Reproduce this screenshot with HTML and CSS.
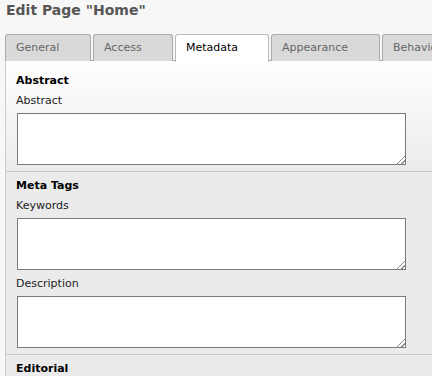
FILE: index.html
```html
<!DOCTYPE html>
<html lang="en">

<head>
  <meta charset="UTF-8">
  <meta name="viewport" content="width=device-width, initial-scale=1.0">
  <title>Edit Page "Home"</title>
  <link rel="stylesheet" href="styles.css">
</head>

<body>
  <h1 class="page-title">Edit Page "Home"</h1>

  <div class="tabs">
    <div class="tab tab-general">General</div>
    <div class="tab tab-access">Access</div>
    <div class="tab tab-metadata active">Metadata</div>
    <div class="tab tab-appearance">Appearance</div>
    <div class="tab tab-behavior">Behavior</div>
  </div>

  <div class="panel">
    <div class="section first">
      <h2>Abstract</h2>
      <label class="field-label">Abstract</label>
      <div class="field"><textarea></textarea></div>
    </div>

    <div class="section">
      <h2>Meta Tags</h2>
      <label class="field-label">Keywords</label>
      <div class="field"><textarea></textarea></div>
      <label class="field-label">Description</label>
      <div class="field"><textarea></textarea></div>
    </div>

    <div class="section">
      <h2>Editorial</h2>
    </div>
  </div>
</body>

</html>
```

FILE: styles.css
```css
body {
  margin: 0;
  background-color: #f7f7f7;
  font-family: "DejaVu Sans", Verdana, sans-serif;
  font-size: 11px;
  overflow: hidden;
}

.page-title {
  margin: 0;
  padding: 1px 6px 0;
  font-size: 14px;
  line-height: 18px;
  color: #555;
}

.tabs {
  display: flex;
  gap: 2px;
  margin-top: 15px;
  padding-left: 5px;
  height: 27px;
}

.tab {
  box-sizing: border-box;
  flex-shrink: 0;
  height: 27px;
  padding-left: 10px;
  line-height: 25px;
  border: 1px solid #aaa;
  border-bottom: none;
  border-radius: 3px 3px 0 0;
  background-color: #d9d9d9;
  color: #666;
  white-space: nowrap;
  overflow: hidden;
}

.tab-general { width: 86px; }
.tab-access { width: 80px; }
.tab-metadata { width: 94px; }
.tab-appearance { width: 109px; }
.tab-behavior { width: 110px; }

.tab.active {
  position: relative;
  z-index: 1;
  height: 28px;
  background-color: #fff;
  border-color: #bbb;
  color: #000;
}

.panel {
  margin-left: 5px;
  margin-top: -1px;
  width: 480px;
  border-top: 1px solid #aaa;
  border-left: 1px solid #ccc;
  background: #ebebeb linear-gradient(#fff, #ebebeb 110px) no-repeat;
}

.section {
  padding: 6px 0 6px 10px;
  border-bottom: 1px solid #c8c8c8;
}

.section.first {
  padding-top: 12px;
}

h2 {
  margin: 0;
  font-size: 11px;
  line-height: 16px;
  color: #000;
}

.field-label {
  display: block;
  margin-top: 4px;
  line-height: 16px;
  color: #222;
}

.field {
  position: relative;
  width: 389px;
  height: 52px;
  margin: 4px 0 0 1px;
}

.field + .field-label {
  margin-top: 6px;
}

.field textarea {
  display: block;
  box-sizing: border-box;
  width: 100%;
  height: 100%;
  margin: 0;
  border: 1px solid #7a7a7a;
  background-color: #fff;
  resize: none;
  font: inherit;
}

/* resize grip drawn over the corner */
.field::after {
  content: "";
  position: absolute;
  right: 1px;
  bottom: 1px;
  width: 10px;
  height: 10px;
  background: repeating-linear-gradient(-45deg, transparent 0 2px, #8a8a8a 2px 3px);
  clip-path: polygon(100% 0, 100% 100%, 0 100%);
}
```
